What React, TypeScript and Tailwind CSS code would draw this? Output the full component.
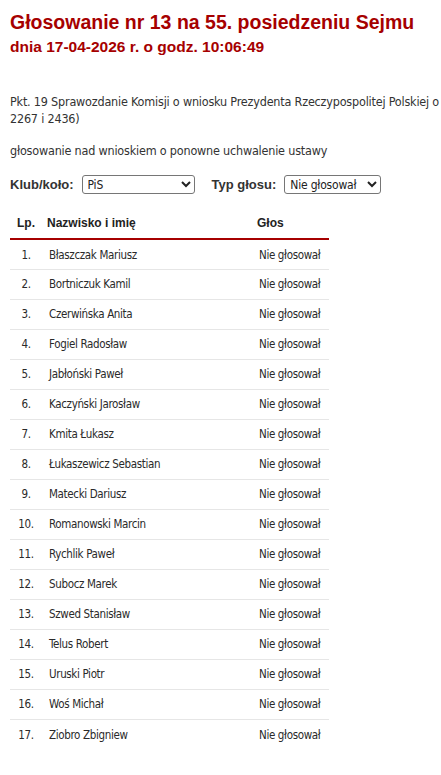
import React from "react"

const posłowie = [
  "Błaszczak Mariusz",
  "Bortniczuk Kamil",
  "Czerwińska Anita",
  "Fogiel Radosław",
  "Jabłoński Paweł",
  "Kaczyński Jarosław",
  "Kmita Łukasz",
  "Łukaszewicz Sebastian",
  "Matecki Dariusz",
  "Romanowski Marcin",
  "Rychlik Paweł",
  "Subocz Marek",
  "Szwed Stanisław",
  "Telus Robert",
  "Uruski Piotr",
  "Woś Michał",
  "Ziobro Zbigniew",
]

export default function App() {
  return (
    <div className="w-[441px] h-[775px] overflow-hidden bg-white text-[12.5px] tracking-[-0.2px] text-[#333] font-['DejaVu_Sans_Condensed','Liberation_Sans',sans-serif]">
      <div className="px-[10px] pt-[10px]">
        <h1 className="font-['Liberation_Sans',Arial,sans-serif] tracking-normal text-[19.5px] leading-[24px] font-bold text-[#a60000] whitespace-nowrap">
          Głosowanie nr 13 na 55. posiedzeniu Sejmu
        </h1>
        <h2 className="font-['Liberation_Sans',Arial,sans-serif] tracking-normal mt-[1px] text-[15.5px] leading-[24px] font-bold text-[#a60000]">
          dnia 17-04-2026 r. o godz. 10:06:49
        </h2>

        <p className="mt-[34px] leading-[17px] whitespace-nowrap">
          Pkt. 19 Sprawozdanie Komisji o wniosku Prezydenta Rzeczypospolitej Polskiej o
          <br />
          2267 i 2436)
        </p>
        <p className="mt-[15px] leading-[17px]">
          głosowanie nad wnioskiem o ponowne uchwalenie ustawy
        </p>

        <div className="mt-[16px] flex items-center h-[19px] text-[13px] tracking-normal">
          <label className="font-['Liberation_Sans',Arial,sans-serif] font-bold">Klub/koło:</label>
          <select
            defaultValue="PiS"
            className="ml-[8px] w-[113px] h-[19px] border border-[#767676] rounded-[3px] px-[1px] text-[12px] tracking-[-0.2px] text-[#222]"
          >
            <option>PiS</option>
            <option>KO</option>
            <option>PSL-TD</option>
            <option>Lewica</option>
          </select>
          <label className="font-['Liberation_Sans',Arial,sans-serif] ml-[17px] font-bold">Typ głosu:</label>
          <select
            defaultValue="Nie głosował"
            className="ml-[8px] w-[97px] h-[19px] border border-[#767676] rounded-[3px] px-[1px] text-[12px] tracking-[-0.2px] text-[#222]"
          >
            <option>Za</option>
            <option>Przeciw</option>
            <option>Wstrzymał się</option>
            <option>Nie głosował</option>
          </select>
        </div>

        <table className="mt-[14px] w-[319px] table-fixed border-collapse whitespace-nowrap">
          <colgroup>
            <col className="w-[32px]" />
            <col className="w-[213px]" />
            <col className="w-[74px]" />
          </colgroup>
          <thead>
            <tr className="h-[31px] border-b-2 border-[#a60000] font-['Liberation_Sans',Arial,sans-serif] text-[12px] tracking-normal">
              <th className="text-center font-bold text-[#222]">Lp.</th>
              <th className="pl-[5px] text-left font-bold text-[#222]">Nazwisko i imię</th>
              <th className="pl-[2px] text-left font-bold text-[#222]">Głos</th>
            </tr>
          </thead>
          <tbody className="text-[11.5px] tracking-[-0.35px] text-[#2a2a2a]">
            {posłowie.map((n, i) => (
              <tr key={n} className="h-[30px] border-b border-[#e6e6e6] last:border-b-0">
                <td className="pt-[2px] text-center">{i + 1}.</td>
                <td className="pt-[2px] pl-[7px]">{n}</td>
                <td className="pt-[2px] pl-[4px]">Nie głosował</td>
              </tr>
            ))}
          </tbody>
        </table>
      </div>
    </div>
  )
}
